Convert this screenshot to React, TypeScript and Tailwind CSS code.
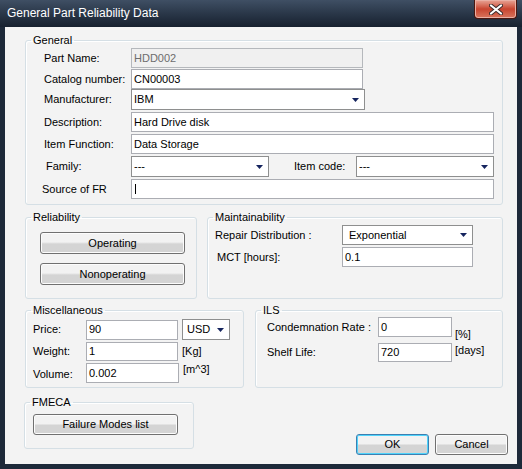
import type { ReactNode } from 'react';

const FONT = "font-['Liberation_Sans',Arial,sans-serif]";

function TextBox({ value, w, h = 20, disabled, caret }: { value?: string; w: number; h?: number; disabled?: boolean; caret?: boolean }) {
  return (
    <div
      className={`flex items-center border border-[#abadb3] px-[2px] text-[11px] leading-none ${disabled ? 'bg-[#f0f0f0] text-[#6d6d6d] border-[#b5b8bc]' : 'bg-white text-black'}`}
      style={{ width: w, height: h }}
    >
      {caret && <span className="ml-[1px] w-px h-[10px] bg-black" />}
      {value}
    </div>
  );
}

function Combo({ value, w, h = 20, pad = 2 }: { value: string; w: number; h?: number; pad?: number }) {
  return (
    <div
      className="flex items-center justify-between border border-[#8e8f8f] bg-white pr-[5px] text-[11px] leading-none text-black"
      style={{ width: w, height: h, paddingLeft: pad }}
    >
      <span>{value}</span>
      <svg width="7" height="4" viewBox="0 0 7 4">
        <path d="M0 0h7L3.5 4z" fill="#15245e" />
      </svg>
    </div>
  );
}

function Btn({ children, w, h, focused }: { children: ReactNode; w: number; h: number; focused?: boolean }) {
  return (
    <div
      className={`flex items-center justify-center rounded-[3px] border bg-linear-to-b from-[#f2f2f2] from-45% to-[#d4d4d4] to-55% text-[11px] text-black ${
        focused ? 'border-[#3c7fb1] shadow-[inset_0_0_0_1px_#4fd3fb]' : 'border-[#707070] shadow-[inset_0_0_0_1px_#fcfcfc]'
      }`}
      style={{ width: w, height: h }}
    >
      <span className="bg-linear-to-b from-transparent to-transparent">{children}</span>
    </div>
  );
}

function Group({ title, className, children }: { title: string; className?: string; children: ReactNode }) {
  return (
    <fieldset className={`rounded-[3px] border border-[#d5dfe5] shadow-[inset_1px_1px_0_#fff] ${className ?? ''}`}>
      <legend className="ml-[5px] px-[2px] text-[11px] leading-[13px] text-black">{title}</legend>
      {children}
    </fieldset>
  );
}

function Row({ label, lw, mt, h = 20, children }: { label: string; lw: number; mt: number; h?: number; children: ReactNode }) {
  return (
    <div className="flex items-center" style={{ marginTop: mt, height: h }}>
      <span className="shrink-0 text-[11px] text-black" style={{ width: lw }}>
        {label}
      </span>
      {children}
    </div>
  );
}

export default function App() {
  return (
    <div className={`${FONT} w-[522px] h-[469px] bg-[#1d2939] flex flex-col`}>
      {/* title bar */}
      <div className="h-[27px] flex items-start justify-between bg-linear-to-b from-[#3f4f64] to-[#17212f]">
        <span className="pl-[7px] pt-[6px] text-[12px] leading-[14px] text-white">General Part Reliability Data</span>
        <div className="mr-[5px] h-[19px] w-[43px] rounded-b-[4px] border border-t-0 border-[#4b1710] shadow-[inset_0_0_0_1px_#eab0a4] bg-linear-to-b from-[#e7a496] via-[#c8442f] to-[#d9745d] flex items-center justify-center">
          <svg width="14" height="11" viewBox="0 0 14 11">
            <path d="M2 1.5l10 8M12 1.5l-10 8" stroke="#3a2a2a" strokeWidth="4" strokeLinecap="round" />
            <path d="M2 1.5l10 8M12 1.5l-10 8" stroke="#ffffff" strokeWidth="2.2" strokeLinecap="round" />
          </svg>
        </div>
      </div>

      {/* client area */}
      <div className="mx-[5px] h-[437px] bg-[#f3f3f3] pl-[20px] pt-[7px] text-black">
        <Group title="General" className="w-[478px]">
          <div className="pl-[18px] pt-[1px] pb-[5px]">
            <Row label="Part Name:" lw={87} mt={0}>
              <TextBox value="HDD002" w={232} disabled />
            </Row>
            <Row label="Catalog number:" lw={87} mt={1}>
              <TextBox value="CN00003" w={232} />
            </Row>
            <Row label="Manufacturer:" lw={87} mt={0} h={21}>
              <Combo value="IBM" w={234} h={21} />
            </Row>
            <Row label="Description:" lw={87} mt={2}>
              <TextBox value="Hard Drive disk" w={363} />
            </Row>
            <Row label="Item Function:" lw={87} mt={2}>
              <TextBox value="Data Storage" w={363} />
            </Row>
            <div className="flex items-center h-[21px] mt-[2px]">
              <span className="w-[87px] pl-[2px] text-[11px]">Family:</span>
              <Combo value="---" w={138} h={21} />
              <span className="w-[87px] pl-[25px] text-[11px]">Item code:</span>
              <Combo value="---" w={138} h={21} />
            </div>
            <div className="flex items-center h-[20px] mt-[2px] -ml-[2px]">
              <span className="w-[89px] text-[11px]">Source of FR</span>
              <TextBox w={363} caret />
            </div>
          </div>
        </Group>

        <div className="flex mt-[6px]">
          <Group title="Reliability" className="w-[172px]">
            <div className="pl-[14px] pt-[8px] pb-[13px]">
              <Btn w={145} h={22}>Operating</Btn>
              <div className="mt-[9px]">
                <Btn w={145} h={22}>Nonoperating</Btn>
              </div>
            </div>
          </Group>
          <Group title="Maintainability" className="ml-[10px] w-[296px]">
            <div className="pl-[7px] pt-[1px]">
              <Row label="Repair Distribution :" lw={127} mt={0}>
                <Combo value="Exponential" w={131} pad={6} />
              </Row>
              <div className="flex items-center h-[20px] mt-[2px]">
                <span className="w-[127px] pl-[2px] text-[11px]">MCT [hours]:</span>
                <TextBox value="0.1" w={131} />
              </div>
            </div>
          </Group>
        </div>

        <div className="flex mt-[5px]">
          <Group title="Miscellaneous" className="w-[219px]">
            <div className="pl-[7px] pt-[2px] pb-[4px]">
              <div className="flex items-center h-[21px]">
                <span className="w-[53px] text-[11px]">Price:</span>
                <TextBox value="90" w={92} />
                <div className="ml-[4px]">
                  <Combo value="USD" w={48} h={21} pad={4} />
                </div>
              </div>
              <div className="flex items-center h-[19px] mt-[2px]">
                <span className="w-[53px] text-[11px]">Weight:</span>
                <TextBox value="1" w={92} h={19} />
                <span className="ml-[4px] text-[11px]">[Kg]</span>
              </div>
              <div className="flex items-start h-[20px] mt-[2px]">
                <span className="w-[53px] self-center pt-[2px] text-[11px]">Volume:</span>
                <TextBox value="0.002" w={93} />
                <span className="ml-[4px] text-[11px] leading-[12px]">[m^3]</span>
              </div>
            </div>
          </Group>
          <Group title="ILS" className="ml-[11px] w-[248px]">
            <div className="pl-[11px]">
              <div className="flex items-end h-[20px]">
                <span className="w-[111px] self-center text-[11px]">Condemnation Rate :</span>
                <TextBox value="0" w={74} />
                <span className="ml-[3px] -mb-[3px] text-[11px] leading-[12px]">[%]</span>
              </div>
              <div className="flex items-start h-[19px] mt-[6px]">
                <span className="w-[111px] self-center text-[11px]">Shelf Life:</span>
                <TextBox value="720" w={74} h={19} />
                <span className="ml-[3px] mt-[1px] text-[11px] leading-[12px]">[days]</span>
              </div>
            </div>
          </Group>
        </div>

        <div className="flex items-start mt-[8px]">
          <Group title="FMECA" className="-ml-[1px] w-[170px]">
            <div className="pl-[8px] pt-[5px] pb-[13px]">
              <Btn w={145} h={21}>Failure Modes list</Btn>
            </div>
          </Group>
          <div className="ml-auto mr-[9px] mt-[38px] flex gap-[6px]">
            <Btn w={73} h={21} focused>OK</Btn>
            <Btn w={73} h={21}>Cancel</Btn>
          </div>
        </div>
      </div>
    </div>
  );
}
